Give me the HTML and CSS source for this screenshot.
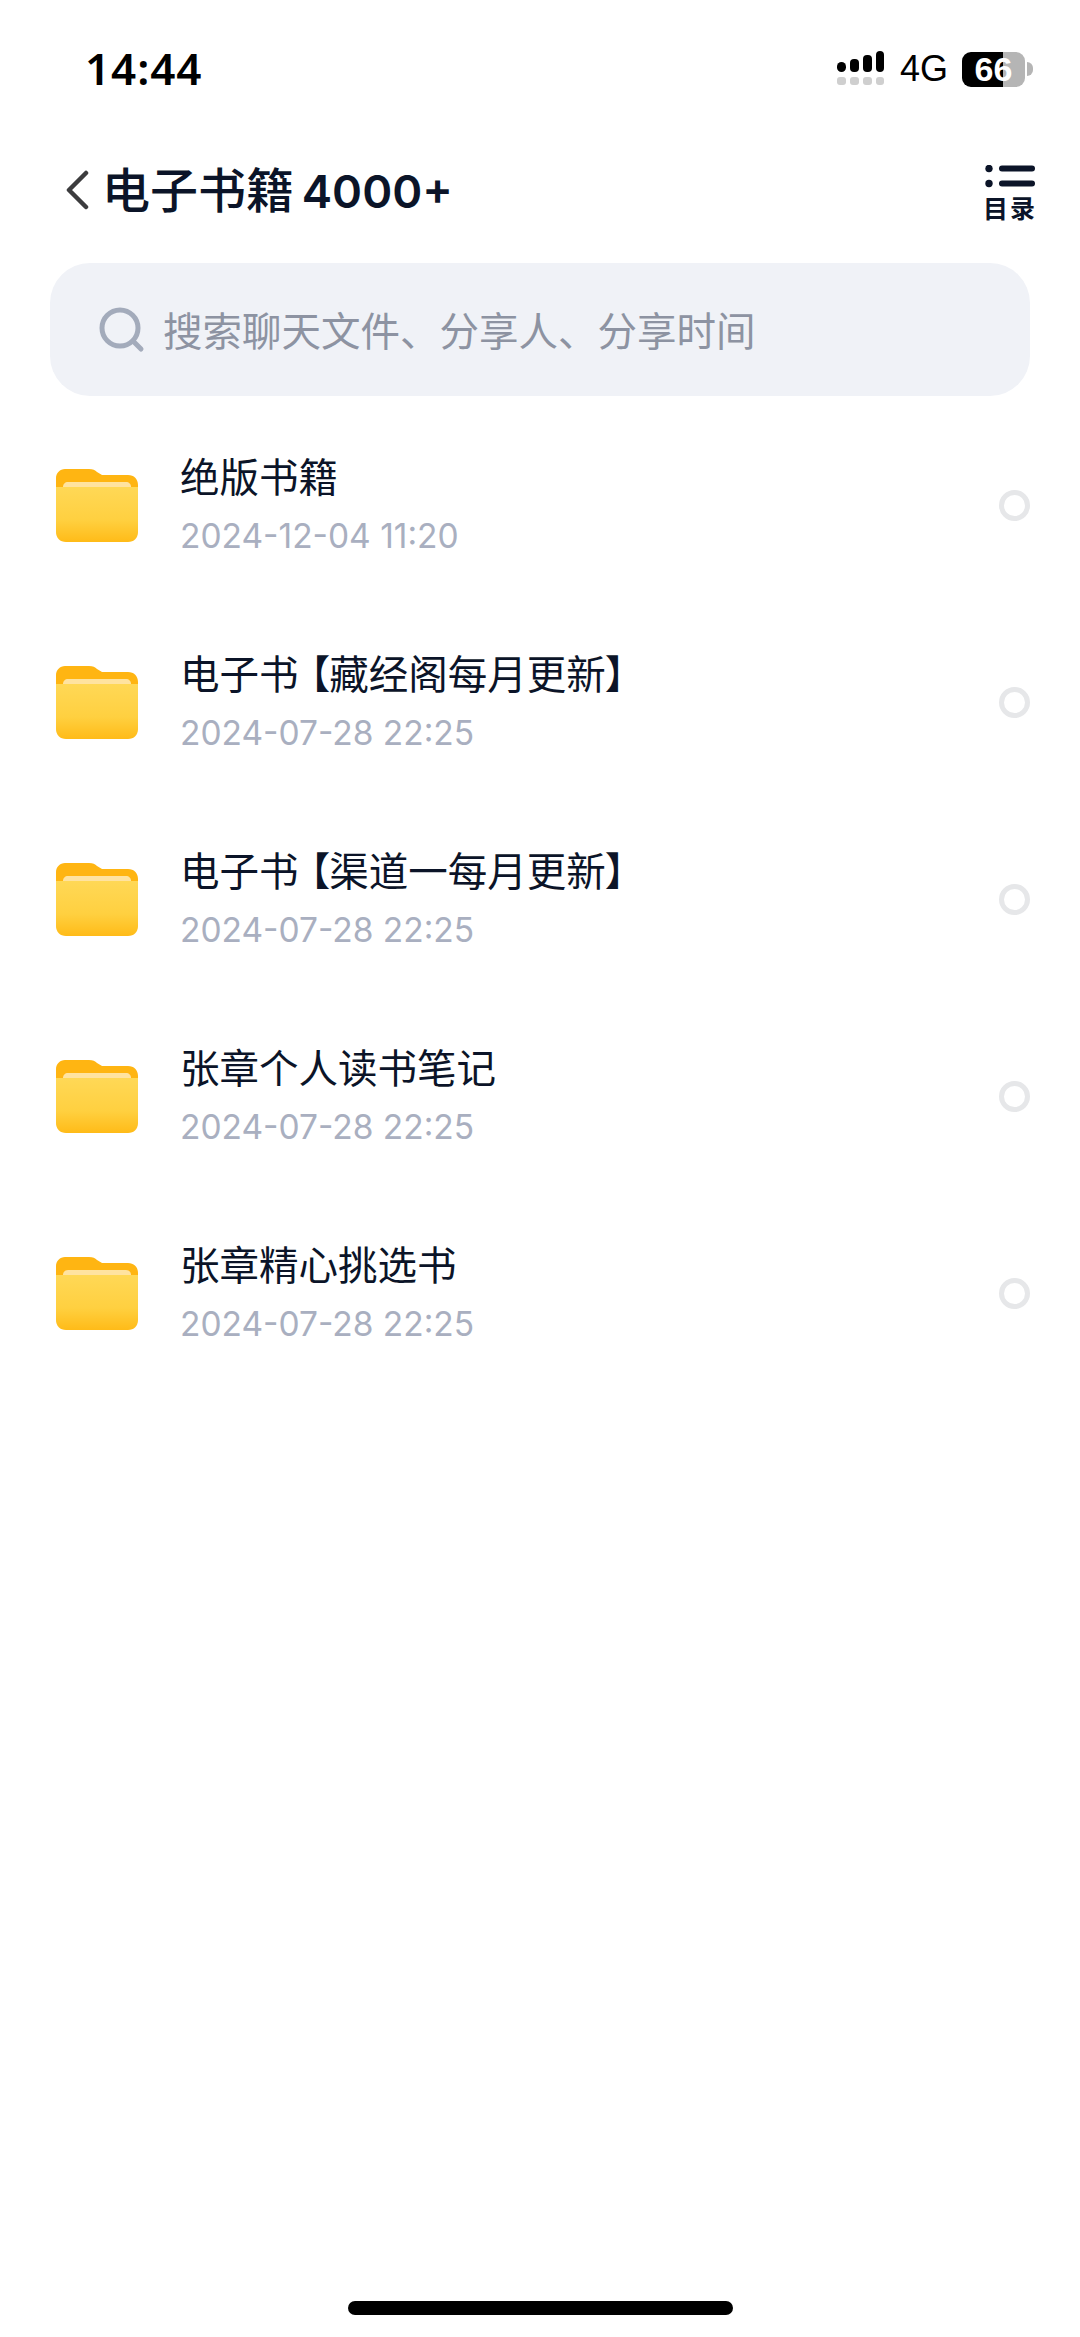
FILE: index.html
```html
<!DOCTYPE html>
<html lang="zh-CN">
<head>
<meta charset="utf-8">
<title>电子书籍 4000+</title>
<link rel="stylesheet" href="styles.css">
</head>
<body>
<div class="page">
  <svg width="0" height="0" class="defs">
    <defs>
      <linearGradient id="fg" x1="0" y1="0" x2="0" y2="1">
        <stop offset="0" stop-color="#ffd856"/>
        <stop offset="0.6" stop-color="#ffd040"/>
        <stop offset="1" stop-color="#ffbb18"/>
      </linearGradient>
      <symbol id="folder" viewBox="0 0 82 73">
        <path d="M9 0H33C37 0 39 1 41 3L46 6H72C78 6 82 10 82 16V30H0V9C0 4 4 0 9 0Z" fill="#ffb512"/>
        <path d="M12 13H70C73 13 75 15 75 18V24H7V18C7 15 9 13 12 13Z" fill="#ffe3a0"/>
        <path d="M0 18H82V63C82 69 78 73 72 73H10C4 73 0 69 0 63Z" fill="url(#fg)"/>
      </symbol>
    </defs>
  </svg>

  <header class="status">
    <span class="time">14:44</span>
    <div class="status-right">
      <svg class="signal" width="50" height="36" viewBox="0 0 50 36">
        <rect x="1" y="11" width="9" height="10" rx="4.5" fill="#000"/>
        <rect x="14" y="8" width="9" height="13" rx="4" fill="#000"/>
        <rect x="27" y="4" width="9" height="17" rx="4" fill="#000"/>
        <rect x="40" y="0" width="8" height="21" rx="4" fill="#000"/>
        <rect x="1" y="26" width="9" height="8" rx="3" fill="#cfcfcf"/>
        <rect x="14" y="26" width="9" height="8" rx="3" fill="#cfcfcf"/>
        <rect x="27" y="26" width="9" height="8" rx="3" fill="#cfcfcf"/>
        <rect x="40" y="26" width="8" height="8" rx="3" fill="#cfcfcf"/>
      </svg>
      <span class="net">4G</span>
      <div class="battery"><span class="level">66</span></div>
      <span class="battery-tip"></span>
    </div>
  </header>

  <nav class="nav">
    <div class="nav-left">
      <svg class="back" width="24" height="40" viewBox="0 0 24 40">
        <path d="M21 3L4 20L21 37" fill="none" stroke="#3c3c3e" stroke-width="4.5" stroke-linecap="round" stroke-linejoin="round"/>
      </svg>
      <h1 class="title">电子书籍 <span class="title-num">4000+</span></h1>
    </div>
    <div class="toc">
      <svg class="toc-icon" width="50" height="23" viewBox="0 0 50 23">
        <circle cx="4" cy="3.5" r="3.7" fill="#0b1428"/>
        <circle cx="4" cy="18.5" r="3.7" fill="#0b1428"/>
        <rect x="14" y="0.5" width="36" height="6" rx="3" fill="#0b1428"/>
        <rect x="14" y="15.5" width="36" height="6" rx="3" fill="#0b1428"/>
      </svg>
      <span class="toc-label">目录</span>
    </div>
  </nav>

  <div class="search">
    <svg class="search-icon" width="46" height="46" viewBox="0 0 46 46">
      <circle cx="21" cy="21" r="18" fill="none" stroke="#a3abbb" stroke-width="5"/>
      <path d="M34 34L42 42" stroke="#a3abbb" stroke-width="5" stroke-linecap="round"/>
    </svg>
    <span class="search-text">搜索聊天文件、分享人、分享时间</span>
  </div>

  <ul class="list">
    <li class="row">
      <svg class="folder" width="82" height="73"><use href="#folder"/></svg>
      <div class="info"><div class="name">绝版书籍</div><div class="date">2024-12-04 11:20</div></div>
      <span class="radio"></span>
    </li>
    <li class="row">
      <svg class="folder" width="82" height="73"><use href="#folder"/></svg>
      <div class="info"><div class="name">电子书<span class="bracket">【</span>藏经阁每月更新】</div><div class="date">2024-07-28 22:25</div></div>
      <span class="radio"></span>
    </li>
    <li class="row">
      <svg class="folder" width="82" height="73"><use href="#folder"/></svg>
      <div class="info"><div class="name">电子书<span class="bracket">【</span>渠道一每月更新】</div><div class="date">2024-07-28 22:25</div></div>
      <span class="radio"></span>
    </li>
    <li class="row">
      <svg class="folder" width="82" height="73"><use href="#folder"/></svg>
      <div class="info"><div class="name">张章个人读书笔记</div><div class="date">2024-07-28 22:25</div></div>
      <span class="radio"></span>
    </li>
    <li class="row">
      <svg class="folder" width="82" height="73"><use href="#folder"/></svg>
      <div class="info"><div class="name">张章精心挑选书</div><div class="date">2024-07-28 22:25</div></div>
      <span class="radio"></span>
    </li>
  </ul>

  <div class="home-wrap"><span class="home-bar"></span></div>
</div>
</body>
</html>
```

FILE: styles.css
```css
* { box-sizing: border-box; margin: 0; padding: 0; }
html, body { width: 1080px; height: 2337px; background: #fff; }
body { font-family: "Noto Sans", "Noto Sans CJK SC", sans-serif; color: #0b1428; overflow: hidden; }
.page { width: 1080px; height: 2337px; display: flex; flex-direction: column; }
.defs { position: absolute; }

.status { height: 145px; padding: 39px 47px 0 85px; display: flex; justify-content: space-between; align-items: flex-start; }
.time { font-family: "Noto Sans", sans-serif; font-size: 44px; font-weight: 600; line-height: 58px; color: #000; letter-spacing: 0.9px; }
.status-right { display: flex; align-items: center; margin-top: 12px; height: 36px; }
.signal { margin-right: 14px; }
.net { font-family: "Liberation Sans", sans-serif; font-size: 36px; line-height: 36px; color: #000; margin-right: 14px; }
.battery { width: 63px; height: 35px; border-radius: 9px; background: linear-gradient(90deg, #000 0 65%, #b5b5b5 65% 100%); display: flex; align-items: center; justify-content: center; }
.level { font-family: "Liberation Sans", sans-serif; font-size: 34px; font-weight: 700; line-height: 35px; color: #fff; }
.battery-tip { width: 6px; height: 14px; margin-left: 2px; border-radius: 0 6px 6px 0; background: #b5b5b5; }

.nav { height: 118px; padding: 0 45px 29px 65px; display: flex; justify-content: space-between; align-items: center; }
.nav-left { display: flex; align-items: center; }
.back { margin-right: 13px; }
.title { font-size: 48px; font-weight: 500; line-height: 60px; color: #0b1428; font-family: "Noto Sans CJK SC", sans-serif; word-spacing: -3px; white-space: nowrap; }
.title-num { font-family: Inter, sans-serif; font-size: 45.5px; font-weight: 600; }
.toc { display: flex; flex-direction: column; align-items: center; width: 50px; margin-top: 6px; }
.toc-icon { margin-bottom: 5px; }
.toc-label { font-size: 25px; font-weight: 700; line-height: 28px; white-space: nowrap; font-family: "Noto Sans CJK SC", sans-serif; letter-spacing: 2px; }

.search { margin: 0 50px; height: 133px; border-radius: 40px; background: #f0f2f7; display: flex; align-items: center; padding-left: 49px; }
.search-icon { margin-right: 18px; flex: none; }
.search-text { font-family: "Noto Sans CJK SC", sans-serif; font-size: 39.5px; color: #8d93a2; line-height: 56px; margin-top: -2px; }

.list { list-style: none; padding: 11px 0 0 56px; }
.row { height: 197px; display: flex; align-items: center; padding-right: 50px; }
.folder { flex: none; margin-right: 42px; }
.info { flex: 1; margin-top: -3px; }
.name { font-family: "Noto Sans CJK SC", sans-serif; font-size: 39.5px; line-height: 56px; color: #0b1428; font-feature-settings: "palt"; margin-top: -2px; }
.bracket { margin-left: 11px; }
.date { font-family: Inter, sans-serif; font-size: 33.5px; line-height: 46px; margin-top: 10px; color: #a9afc0; }
.radio { width: 31px; height: 31px; border: 5px solid #e6e7e9; border-radius: 50%; flex: none; }

.home-wrap { margin-top: auto; height: 36px; display: flex; justify-content: center; align-items: flex-start; }
.home-bar { width: 385px; height: 14px; background: #000; border-radius: 7px; }
```
